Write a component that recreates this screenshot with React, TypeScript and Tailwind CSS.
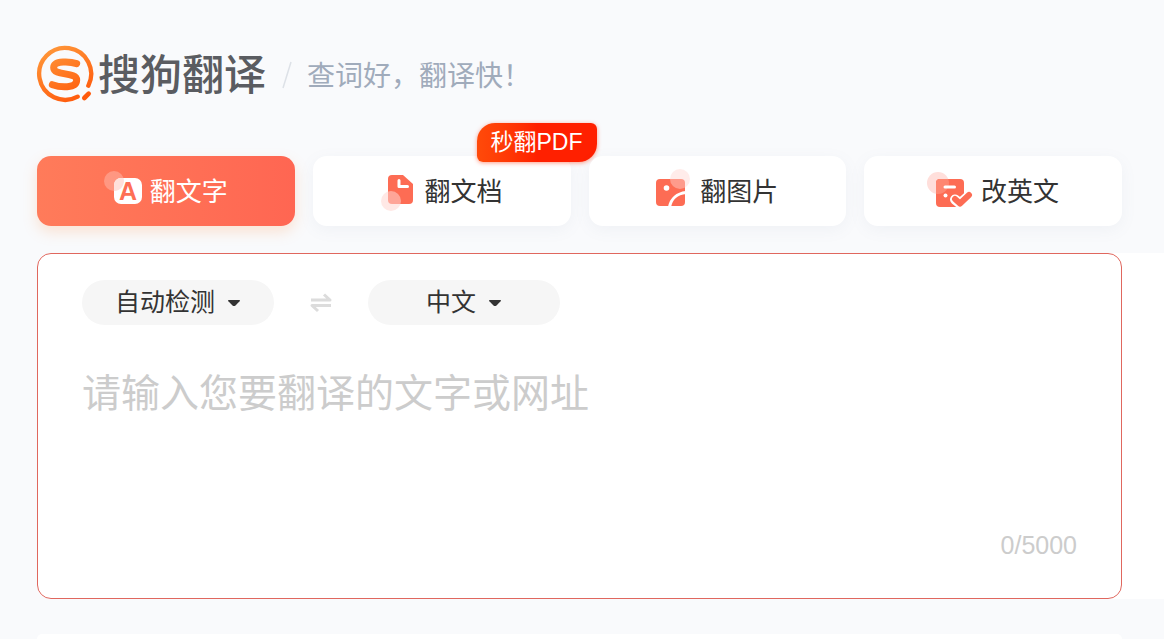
import { useState } from 'react';
import type { ReactNode } from 'react';

function LogoMark() {
  return (
    <svg viewBox="33 29 174 174" className="size-[58px] shrink-0" fill="none" strokeLinecap="round" aria-hidden="true">
      <defs>
        <linearGradient id="logo" x1="60" y1="30" x2="150" y2="200" gradientUnits="userSpaceOnUse">
          <stop offset="0" stopColor="#ff9a3c" />
          <stop offset="1" stopColor="#ff5a0c" />
        </linearGradient>
      </defs>
      <g stroke="url(#logo)">
        <path d="M190 151 A78 78 0 1 0 158 184" strokeWidth="13" />
        <path d="M191 175 L178 188" strokeWidth="14" />
        <path d="M155 85 C138 79 86 74 86 97 C86 122 155 109 155 134 C155 161 104 156 82 148" strokeWidth="21" />
      </g>
    </svg>
  );
}

function TextIcon() {
  return (
    <svg viewBox="0 0 38 40" className="h-10 w-[38px] shrink-0" aria-hidden="true">
      <circle cx="10" cy="10" r="10" fill="#fff" fillOpacity="0.25" />
      <rect x="10" y="7" width="28" height="26" rx="7" fill="#fff" />
      <path d="M10 20 V14 a7 7 0 0 1 7 -7 h2.500 A10 10 0 0 1 10 20Z" fill="#ffe1db" />
      <text x="24" y="29" textAnchor="middle" fontSize="25" fontWeight="700" fill="#fe6f55">
        A
      </text>
    </svg>
  );
}

function DocIcon() {
  return (
    <svg viewBox="0 0 36 40" className="h-10 w-9 shrink-0" aria-hidden="true">
      <path d="M11 4 H22 L32 13 V29 a4 4 0 0 1 -4 4 H11 a4 4 0 0 1 -4 -4 V8 a4 4 0 0 1 4 -4Z" fill="#fd6c54" />
      <path d="M18 9.500 V15.500 H26.500" fill="none" stroke="#fff" strokeWidth="3" strokeLinecap="round" strokeLinejoin="round" />
      <circle cx="10" cy="30" r="10" fill="#ffd5d0" fillOpacity="0.55" />
    </svg>
  );
}

function ImageIcon() {
  return (
    <svg viewBox="0 0 36 44" className="h-11 w-9 shrink-0" aria-hidden="true">
      <rect x="0" y="10" width="29" height="27" rx="4" fill="#fd6c54" />
      <circle cx="24" cy="10" r="10" fill="#ffd5d0" fillOpacity="0.45" />
      <circle cx="10.500" cy="19" r="2.800" fill="#fff" />
      <path d="M13.500 38 C15 30 21 24.500 30 23.500" fill="none" stroke="#fff" strokeWidth="3" />
    </svg>
  );
}

function EditIcon() {
  return (
    <svg viewBox="0 0 46 38" className="h-[38px] w-[46px] shrink-0" aria-hidden="true">
      <circle cx="11" cy="11" r="11" fill="#ffdfdb" />
      <rect x="9" y="7" width="28" height="28" rx="4" fill="#fd6c54" />
      <path d="M9 21.800 V11 a4 4 0 0 1 4 -4 h8.200 A11 11 0 0 1 9 21.800Z" fill="#fe8771" />
      <path d="M18 15 H27.500" stroke="#fff" strokeWidth="3" strokeLinecap="round" />
      <circle cx="18.500" cy="23.500" r="2" fill="#fff" />
      <path d="M28 27.500 L33 31.500 L42 23.500" fill="none" stroke="#fff" strokeWidth="10" strokeLinecap="round" strokeLinejoin="round" />
      <path d="M28 27 L33 31.500 L42 23" fill="none" stroke="#fd6c54" strokeWidth="6" strokeLinecap="round" strokeLinejoin="round" />
    </svg>
  );
}

function SwapIcon() {
  return (
    <svg viewBox="0 0 22 20" className="h-5 w-[22px]" fill="none" stroke="#dcdcdc" strokeWidth="3" aria-hidden="true">
      <path d="M1 7 H20 L14 1.500" strokeLinejoin="round" />
      <path d="M21 12.500 H2 L8 18" strokeLinejoin="round" />
    </svg>
  );
}

const tabs: { id: string; label: string; icon: ReactNode; badge?: string }[] = [
  { id: 'text', label: '翻文字', icon: <TextIcon /> },
  { id: 'doc', label: '翻文档', icon: <DocIcon />, badge: '秒翻PDF' },
  { id: 'image', label: '翻图片', icon: <ImageIcon /> },
  { id: 'edit', label: '改英文', icon: <EditIcon /> },
];

function LangSelect({ label, options }: { label: string; options: string[] }) {
  const [value, setValue] = useState(options[0]);

  return (
    <label className="flex h-[45px] w-48 items-center justify-center gap-3 rounded-full bg-[#f6f6f6]">
      <select
        aria-label={label}
        value={value}
        onChange={(e) => setValue(e.target.value)}
        className="mb-0.5 appearance-none bg-transparent text-[25px] leading-9 text-[#333] outline-none [field-sizing:content]"
      >
        {options.map((option) => (
          <option key={option}>{option}</option>
        ))}
      </select>
      <svg viewBox="0 0 14 8" className="h-2 w-3.5" fill="#333" aria-hidden="true">
        <path d="M1.500 1 H12.500 Q13.500 1.300 12.600 2.300 L8.500 6.500 Q7 7.600 5.500 6.500 L1.400 2.300 Q0.500 1.300 1.500 1Z" />
      </svg>
    </label>
  );
}

export default function App() {
  const [activeTab, setActiveTab] = useState('text');
  const [text, setText] = useState('');

  return (
    <div className="flex min-h-screen flex-col bg-[#f9fafc] font-['Liberation_Sans','Noto_Sans_CJK_SC',sans-serif]">
      {/* Header */}
      <header className="flex h-[156px] items-start pt-[45px] pl-9">
        <a href="#" className="flex items-start gap-1 text-[42px] leading-[62px] font-medium text-[#5a5c61]">
          <LogoMark />
          <span>搜狗翻译</span>
        </a>
        <svg viewBox="0 0 10 28" className="mt-4 ml-4 h-7 w-2.5" stroke="#dde1e7" strokeWidth="1.500" aria-hidden="true">
          <path d="M9 1 L1 27" />
        </svg>
        <p className="ml-[15px] text-[28px] leading-[64px] text-[#a0abbb]">查词好，翻译快！</p>
      </header>

      {/* Tabs */}
      <nav className="mr-[42px] ml-[37px] grid grid-cols-4 gap-[18px]">
        {tabs.map((tab) => (
          <button
            key={tab.id}
            type="button"
            onClick={() => setActiveTab(tab.id)}
            className={`relative flex h-[70px] items-center justify-center gap-2 rounded-[14px] text-[26px] ${
              activeTab === tab.id
                ? 'bg-linear-to-r from-[#ff7b5a] to-[#ff6652] text-white shadow-[0_6px_14px_rgba(255,160,90,0.25)]'
                : 'bg-white text-[#333] shadow-[0_4px_16px_rgba(120,130,150,0.07)]'
            }`}
          >
            {tab.icon}
            <span className="pt-0.5">{tab.label}</span>
            {tab.badge && (
              <span className="absolute -top-[33px] -right-[26px] rounded-tl-[18px] rounded-tr-md rounded-br-[18px] rounded-bl-md bg-linear-to-r from-[#ff4a0a] to-[#ff2000] to-50% px-3.5 text-[23px] leading-[39px] text-white shadow-[0_1px_4px_rgba(255,60,20,0.5)]">
                {tab.badge}
              </span>
            )}
          </button>
        ))}
      </nav>

      {/* Translate box */}
      <main className="mt-[27px] ml-[37px] rounded-l-[14px] bg-white pr-[42px]">
        <div className="rounded-[14px] border border-[#e0675e] px-11 pt-[26px] pb-[38px]">
          <div className="flex items-center">
            <LangSelect label="源语言" options={['自动检测', '英语', '日语']} />
            <button type="button" aria-label="交换语言" className="mx-9">
              <SwapIcon />
            </button>
            <LangSelect label="目标语言" options={['中文', '英语', '日语']} />
          </div>
          <textarea
            aria-label="翻译内容"
            value={text}
            maxLength={5000}
            onChange={(e) => setText(e.target.value)}
            placeholder="请输入您要翻译的文字或网址"
            className="mt-10 block h-[166px] w-full resize-none text-[39px] leading-[58px] text-[#333] outline-none placeholder:text-[#ccc]"
          />
          <p className="text-right text-[25px] leading-[29px] text-[#ccc]">{text.length}/5000</p>
        </div>
      </main>

      <section className="mt-[35px] mr-[42px] ml-[37px] flex-1 rounded-t-[14px] bg-white" />
    </div>
  );
}
